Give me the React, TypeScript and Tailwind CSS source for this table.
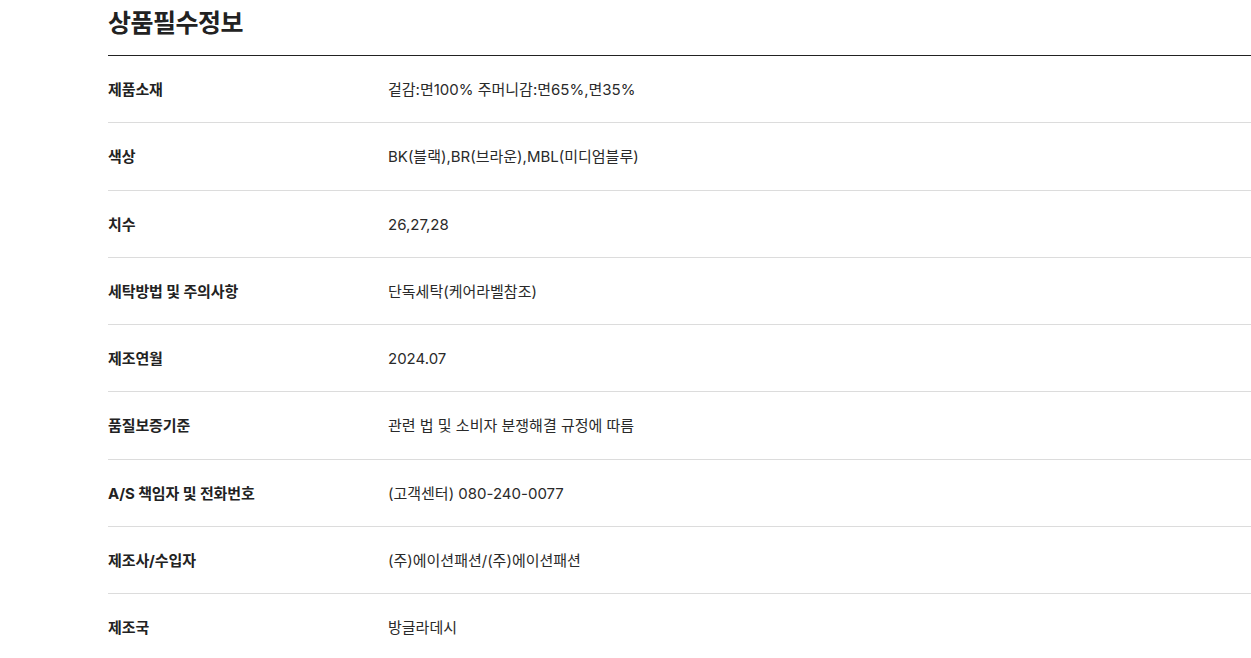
const ROWS = [
  { label: '제품소재', value: '겉감:면100% 주머니감:면65%,면35%' },
  { label: '색상', value: 'BK(블랙),BR(브라운),MBL(미디엄블루)' },
  { label: '치수', value: '26,27,28' },
  { label: '세탁방법 및 주의사항', value: '단독세탁(케어라벨참조)' },
  { label: '제조연월', value: '2024.07' },
  { label: '품질보증기준', value: '관련 법 및 소비자 분쟁해결 규정에 따름' },
  { label: 'A/S 책임자 및 전화번호', value: '(고객센터) 080-240-0077' },
  { label: '제조사/수입자', value: '(주)에이션패션/(주)에이션패션' },
  { label: '제조국', value: '방글라데시' },
];

export default function App() {
  return (
    <div
      className="min-h-screen bg-white pl-[108px] text-[#222]"
      style={{ fontFamily: 'Inter, "Noto Sans CJK KR", sans-serif' }}
    >
      <h2 className="border-b border-[#222] pt-[5px] pb-[14px] text-[25px] font-bold leading-[36px] tracking-[-0.5px]">
        상품필수정보
      </h2>
      <dl>
        {ROWS.map((row) => (
          <div key={row.label} className="flex border-b border-[#dcdcdc] pt-[22px] pb-[20px] text-[15px] leading-[24.3px]">
            <dt className="w-[280px] shrink-0 font-bold tracking-[-0.1px] text-[#222]">{row.label}</dt>
            <dd className="text-[#2a2a2a]">{row.value}</dd>
          </div>
        ))}
      </dl>
    </div>
  );
}
